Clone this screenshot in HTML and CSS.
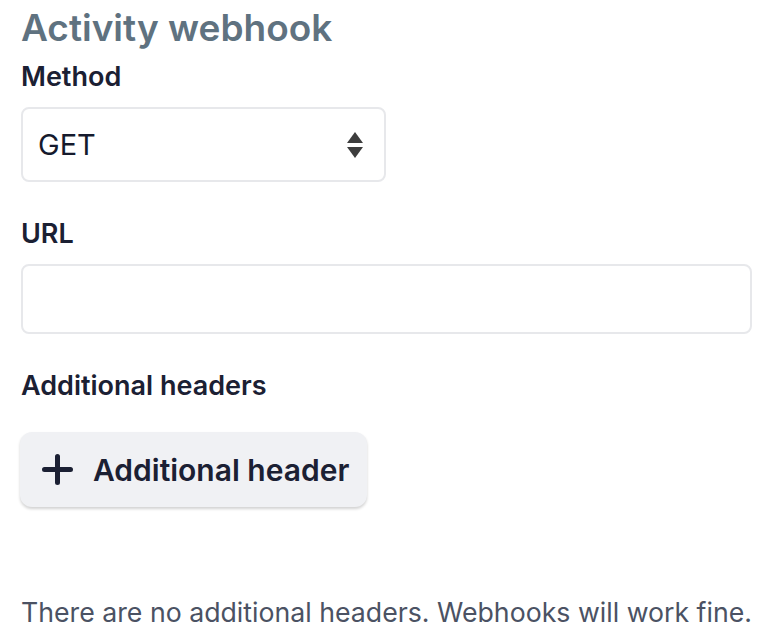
FILE: index.html
```html
<!DOCTYPE html>
<html>
<head>
<meta charset="utf-8">
<link rel="stylesheet" href="styles.css">
</head>
<body>
<div class="page">
  <h1 class="title">Activity webhook</h1>
  <div class="label label-method">Method</div>
  <div class="select">
    <span class="select-value">GET</span>
    <svg class="select-arrows" width="16" height="26" viewBox="0 0 16 26">
      <polygon points="8,0 16,11 0,11" fill="#3d3d3d"/>
      <polygon points="0,15 16,15 8,26" fill="#3d3d3d"/>
    </svg>
  </div>
  <div class="label label-url">URL</div>
  <div class="input"></div>
  <div class="label label-headers">Additional headers</div>
  <button class="btn">
    <svg class="btn-plus" width="31" height="31" viewBox="0 0 31 31">
      <path d="M15.5 2.5v26M2.5 15.5h26" stroke="#1b2033" stroke-width="5" stroke-linecap="round"/>
    </svg>
    <span class="btn-text">Additional header</span>
  </button>
  <p class="note">There are no additional headers. Webhooks will work fine.</p>
</div>
</body>
</html>
```
FILE: styles.css
```css
html, body {
  margin: 0;
  padding: 0;
  background: #ffffff;
}
body {
  font-family: Inter, "Noto Sans", sans-serif;
}
.page {
  padding: 8px 16px 0 21px;
  display: flex;
  flex-direction: column;
  align-items: flex-start;
}
.title {
  margin: 0;
  font-size: 37px;
  line-height: 40px;
  font-weight: 600;
  color: #5f7280;
}
.label {
  font-size: 27px;
  line-height: 32px;
  font-weight: 600;
  color: #1b2033;
}
.label-method { margin-top: 13px; }
.label-url { margin-top: 36px; }
.label-headers { margin-top: 36px; }
.select {
  margin-top: 14px;
  box-sizing: border-box;
  width: 365px;
  height: 75px;
  border: 2px solid #e7e8eb;
  border-radius: 8px;
  display: flex;
  align-items: center;
  justify-content: space-between;
  padding: 0 21px 0 15px;
}
.select-value {
  font-size: 29px;
  color: #151a2d;
}
.input {
  margin-top: 14px;
  box-sizing: border-box;
  width: 731px;
  height: 70px;
  border: 2px solid #e7e8eb;
  border-radius: 8px;
}
.btn {
  margin-top: 30px;
  margin-left: -1px;
  box-sizing: border-box;
  width: 347px;
  height: 75px;
  border: none;
  border-radius: 12px;
  background: #f0f1f4;
  box-shadow: 0 2px 3px rgba(0, 0, 0, 0.18);
  display: flex;
  align-items: center;
  padding: 0 0 0 22px;
  gap: 20px;
  font-family: inherit;
}
.btn-text {
  font-size: 30px;
  font-weight: 600;
  color: #1b2033;
}
.note {
  margin: 89px 0 0 0;
  font-size: 26.7px;
  line-height: 32px;
  font-weight: 400;
  color: #4b5263;
}
```
